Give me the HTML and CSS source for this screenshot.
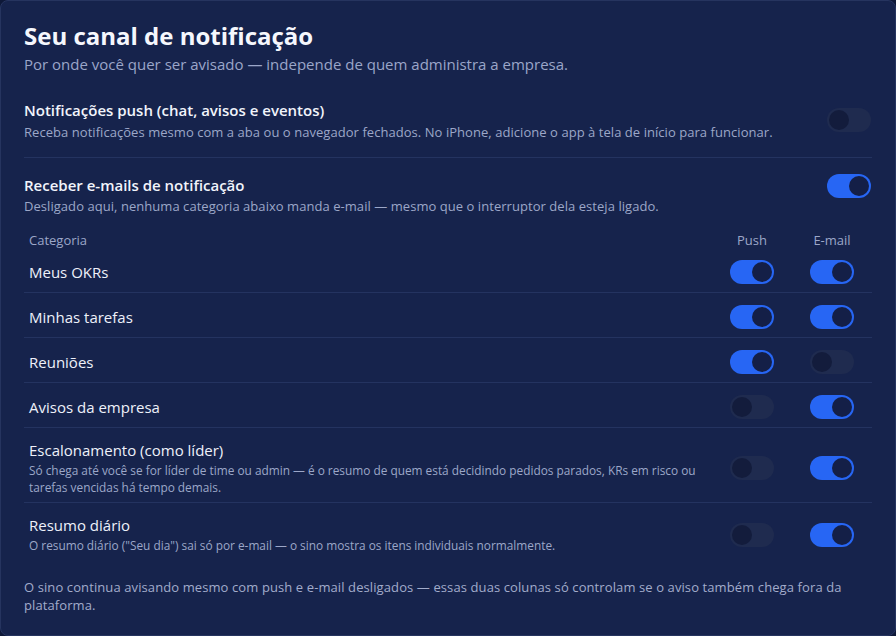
FILE: index.html
```html
<!DOCTYPE html>
<html lang="pt-BR">
<head>
<meta charset="utf-8">
<title>Seu canal de notificação</title>
<link rel="stylesheet" href="styles.css">
</head>
<body>
<section class="card">
  <h1 class="title">Seu canal de notificação</h1>
  <p class="subtitle">Por onde você quer ser avisado — independe de quem administra a empresa.</p>

  <div class="setting setting--push">
    <div class="setting-text">
      <div class="setting-label">Notificações push (chat, avisos e eventos)</div>
      <div class="setting-desc">Receba notificações mesmo com a aba ou o navegador fechados. No iPhone, adicione o app à tela de início para funcionar.</div>
    </div>
    <span class="toggle"><span class="knob"></span></span>
  </div>

  <div class="setting setting--email">
    <div class="setting-text">
      <div class="setting-label">Receber e-mails de notificação</div>
      <div class="setting-desc">Desligado aqui, nenhuma categoria abaixo manda e-mail — mesmo que o interruptor dela esteja ligado.</div>
    </div>
    <span class="toggle on"><span class="knob"></span></span>
  </div>

  <div class="table">
    <div class="trow thead">
      <div class="cell-name">Categoria</div>
      <div class="cell-col">Push</div>
      <div class="cell-col">E-mail</div>
    </div>
    <div class="trow">
      <div class="cell-name"><div class="row-label">Meus OKRs</div></div>
      <div class="cell-col"><span class="toggle on"><span class="knob"></span></span></div>
      <div class="cell-col"><span class="toggle on"><span class="knob"></span></span></div>
    </div>
    <div class="trow">
      <div class="cell-name"><div class="row-label">Minhas tarefas</div></div>
      <div class="cell-col"><span class="toggle on"><span class="knob"></span></span></div>
      <div class="cell-col"><span class="toggle on"><span class="knob"></span></span></div>
    </div>
    <div class="trow">
      <div class="cell-name"><div class="row-label">Reuniões</div></div>
      <div class="cell-col"><span class="toggle on"><span class="knob"></span></span></div>
      <div class="cell-col"><span class="toggle"><span class="knob"></span></span></div>
    </div>
    <div class="trow">
      <div class="cell-name"><div class="row-label">Avisos da empresa</div></div>
      <div class="cell-col"><span class="toggle"><span class="knob"></span></span></div>
      <div class="cell-col"><span class="toggle on"><span class="knob"></span></span></div>
    </div>
    <div class="trow trow--desc">
      <div class="cell-name">
        <div class="row-label">Escalonamento (como líder)</div>
        <div class="row-desc">Só chega até você se for líder de time ou admin — é o resumo de quem está decidindo pedidos parados, KRs em risco ou tarefas vencidas há tempo demais.</div>
      </div>
      <div class="cell-col"><span class="toggle"><span class="knob"></span></span></div>
      <div class="cell-col"><span class="toggle on"><span class="knob"></span></span></div>
    </div>
    <div class="trow trow--desc last">
      <div class="cell-name">
        <div class="row-label">Resumo diário</div>
        <div class="row-desc">O resumo diário ("Seu dia") sai só por e-mail — o sino mostra os itens individuais normalmente.</div>
      </div>
      <div class="cell-col"><span class="toggle"><span class="knob"></span></span></div>
      <div class="cell-col"><span class="toggle on"><span class="knob"></span></span></div>
    </div>
  </div>

  <p class="footnote">O sino continua avisando mesmo com push e e-mail desligados — essas duas colunas só controlam se o aviso também chega fora da plataforma.</p>
</section>
</body>
</html>
```

FILE: styles.css
```css
* { box-sizing: border-box; }

html, body {
  margin: 0;
  padding: 0;
  background: #0e1838;
}

body {
  font-family: "Open Sans", "Inter", sans-serif;
  color: #eef1fa;
}

.card {
  width: 896px;
  height: 636px;
  background: #16234c;
  border: 1px solid #26345f;
  border-radius: 8px;
  padding: 20px 23px 0 23px;
}

.title {
  margin: 0;
  font-size: 24px;
  font-weight: 700;
  line-height: 30px;
  color: #f5f7fd;
}

.subtitle {
  margin: 3px 0 0;
  font-size: 15px;
  line-height: 20px;
  color: #9ba6c9;
}

.setting {
  display: flex;
  align-items: flex-start;
  gap: 16px;
}

.setting--push {
  padding: 26px 0 16px;
  border-bottom: 1px solid #243360;
}

.setting--push .toggle {
  margin-top: 8px;
}

.setting--push .setting-desc {
  margin-top: 3px;
}

.setting--email {
  padding-top: 17px;
}

.setting--email .toggle {
  margin-top: -1px;
}

.setting-text {
  flex: 1;
}

.setting-label {
  font-size: 15px;
  font-weight: 600;
  line-height: 20px;
  color: #f1f4fb;
}

.setting-desc {
  margin-top: 2px;
  font-size: 13px;
  line-height: 18px;
  letter-spacing: 0.05px;
  color: #9ca7c8;
}

.setting .toggle {
  margin-right: 1px;
}

.table {
  margin-top: 17px;
}

.trow {
  display: grid;
  grid-template-columns: 1fr 80px 80px;
  align-items: center;
  padding: 12px 0 8px;
  border-bottom: 1px solid #243360;
}

.trow--desc {
  padding: 12px 0 6px;
}

.trow.thead {
  padding: 0;
  border-bottom: none;
  font-size: 13px;
  line-height: 16px;
  color: #9ca7c8;
}

.trow.last {
  border-bottom: none;
}

.cell-name {
  padding-left: 5px;
  padding-right: 4px;
}

.cell-col {
  display: flex;
  justify-content: center;
}

.row-label {
  font-size: 15px;
  font-weight: 500;
  line-height: 24px;
  color: #eef1fa;
}

.trow--desc .row-label {
  line-height: 20px;
}

.row-desc {
  margin-top: 2px;
  font-size: 11.85px;
  line-height: 17px;
  color: #9ca7c8;
}

.toggle {
  position: relative;
  display: inline-block;
  width: 44px;
  height: 24px;
  border-radius: 12px;
  background: #1f2b4f;
  flex-shrink: 0;
}

.toggle .knob {
  position: absolute;
  top: 2px;
  left: 2px;
  width: 20px;
  height: 20px;
  border-radius: 50%;
  background: #131c3c;
}

.toggle.on {
  background: #2766f4;
}

.toggle.on .knob {
  left: 22px;
  background: #141f47;
}

.footnote {
  margin: 18px 0 0;
  font-size: 13px;
  line-height: 18px;
  letter-spacing: 0.1px;
  color: #a2accb;
}
```
